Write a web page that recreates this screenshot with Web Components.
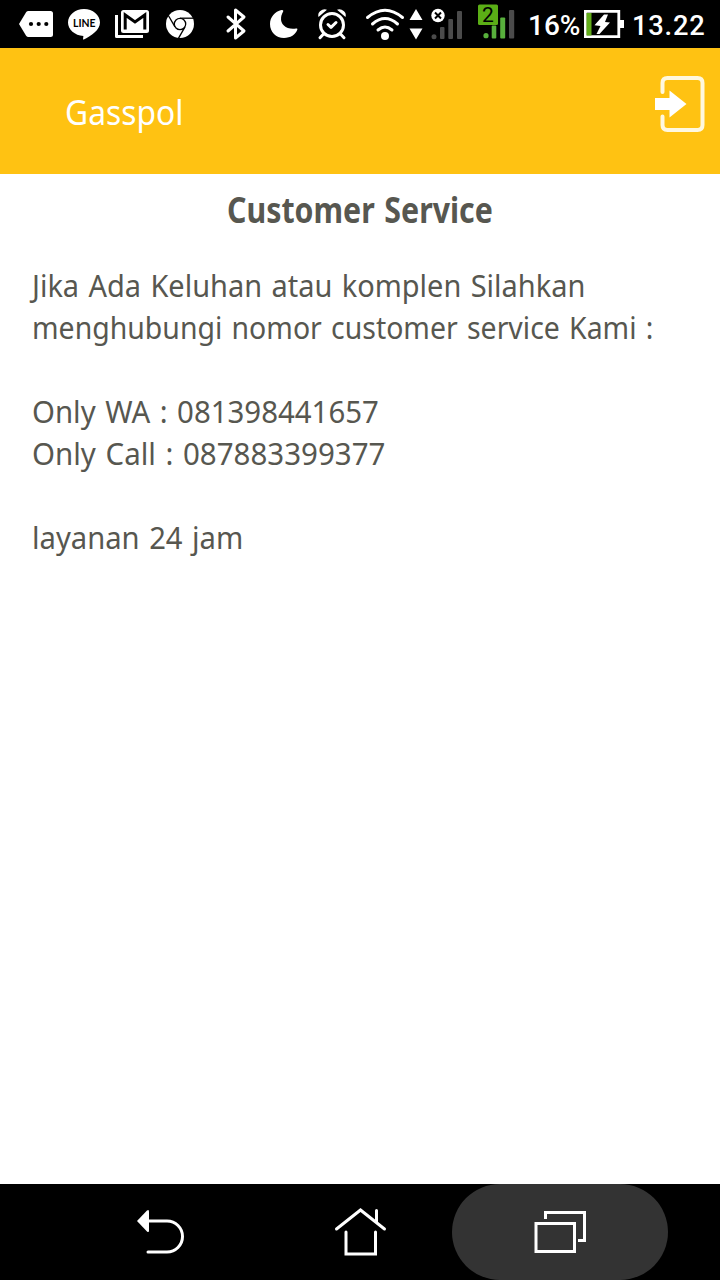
<!DOCTYPE html>
<html lang="id">
<head>
<meta charset="utf-8">
<title>Gasspol</title>
<style>
    html, body {
        margin: 0;
        height: 100%;
        background: #fff;
    }
</style>
</head>
<body>
<app-screen>
    <status-bar slot="status"></status-bar>
    <app-header slot="header"><fit-text width="118">Gasspol</fit-text></app-header>
    <service-info>
        <fit-text slot="title" width="266">Customer Service</fit-text>
        <fit-text width="553">Jika Ada Keluhan atau komplen Silahkan</fit-text>
        <fit-text width="621">menghubungi nomor customer service Kami :</fit-text>
        <br>
        <fit-text width="347">Only WA : 081398441657</fit-text>
        <fit-text width="353">Only Call : 087883399377</fit-text>
        <br>
        <fit-text width="211">layanan 24 jam</fit-text>
    </service-info>
    <nav-bar slot="nav"></nav-bar>
</app-screen>

<script>
// One line of text, condensed to the given width
class FitText extends HTMLElement {
    constructor() {
        super();
        this.attachShadow({ mode: 'open' });
        this.shadowRoot.innerHTML = `
            <style>
                :host {
                    display: block;
                    white-space: nowrap;
                }

                span {
                    display: inline-block;
                    transform-origin: 0 50%;
                }
            </style>
            <span><slot></slot></span>
        `;
    }

    connectedCallback() {
        const span = this.shadowRoot.querySelector('span');
        const width = Number(this.getAttribute('width'));
        this.style.width = width + 'px';
        requestAnimationFrame(() => {
            span.style.transform = `scaleX(${width / span.offsetWidth})`;
        });
    }
}

class AppScreen extends HTMLElement {
    constructor() {
        super();
        this.attachShadow({ mode: 'open' });
        this.shadowRoot.innerHTML = `
            <style>
                :host {
                    display: flex;
                    flex-direction: column;
                    width: 720px;
                    height: 1280px;
                    overflow: hidden;
                    background: #fff;
                    color: #575750;
                    font-family: "Noto Sans", "Open Sans", sans-serif;
                }

                main {
                    flex: 1;
                }
            </style>
            <slot name="status"></slot>
            <slot name="header"></slot>
            <main><slot></slot></main>
            <slot name="nav"></slot>
        `;
    }
}

class StatusBar extends HTMLElement {
    constructor() {
        super();
        this.attachShadow({ mode: 'open' });
        this.shadowRoot.innerHTML = `
            <style>
                :host {
                    display: flex;
                    height: 48px;
                    background: #000;
                    color: #fff;
                    font: 500 28px/51px Roboto, sans-serif;
                }

                svg {
                    flex: none;
                    height: 48px;
                    fill: #fff;
                }

                .line {
                    fill: none;
                    stroke: #fff;
                    stroke-width: 3;
                    stroke-linecap: round;
                    stroke-linejoin: round;
                }

                .cut {
                    fill: none;
                    stroke: #000;
                    stroke-width: 1.6;
                }

                .off { fill: #4b4b4b; }
                .on { fill: #58b03c; }

                .level {
                    width: 56px;
                    padding-left: 7px;
                }

                .clock {
                    padding-left: 6px;
                    letter-spacing: .8px;
                }
            </style>

            <svg width="60" viewBox="0 0 60 48">
                <path d="M28.5 11h22a2.5 2.5 0 0 1 2.500 2.500v21a2.500 2.500 0 0 1-2.500 2.500h-22q-1.600 0-2.400-1.300L19 24l7.100-11.700q.8-1.300 2.400-1.300z"/>
                <g fill="#000"><circle cx="31" cy="24" r="2.1"/><circle cx="38.7" cy="24" r="2.1"/><circle cx="46.3" cy="24" r="2.1"/></g>
            </svg>
            <svg width="48" viewBox="60 0 48 48">
                <path d="M84 9c8.800 0 16 6 16 13.400 0 4-2.200 7-5.200 9.800-3.300 3-8 6-11 7.200-.7.200-.9-.3-.7-1l.3-2.400C74.800 35.200 68 29.600 68 22.400 68 15 75.200 9 84 9z"/>
                <text x="73" y="26.500" font-size="10.500" font-weight="700" font-family="Lato" fill="#000" textLength="22.500" lengthAdjust="spacingAndGlyphs">LINE</text>
            </svg>
            <svg width="48" viewBox="108 0 48 48">
                <path class="line" style="stroke-linecap:butt" d="M116.500 15v21.500H143"/>
                <rect x="121" y="10" width="28" height="23" rx="2.500"/>
                <path class="cut" style="stroke-width:3" d="M125.200 29.500V15L135 22l9.800-7v14.500"/>
            </svg>
            <svg width="48" viewBox="156 0 48 48">
                <circle cx="180" cy="24" r="14"/>
                <g class="cut" style="stroke-width:1.300">
                    <circle cx="180" cy="24" r="5.700"/>
                    <path d="M180 18.200h13.500"/>
                    <path d="M180 18.200h13.500" transform="rotate(120 180 24)"/>
                    <path d="M180 18.200h13.500" transform="rotate(240 180 24)"/>
                </g>
            </svg>
            <svg width="56" viewBox="204 0 56 48">
                <path class="line" d="M228 17l16 14-8.500 7V10l8.500 7-16 14"/>
            </svg>
            <svg width="48" viewBox="260 0 48 48">
                <path d="M281.500 10c-6.500 1.500-11.500 7-11.500 14 0 8 6 14 14 14 6.500 0 11.500-3.300 13.300-8.200.3-1-.2-1.500-1.200-1.300-9 1.500-16-3.500-15-11 .3-2.500 1-4 2-5.800.6-1.200-.2-2.100-1.600-1.700z"/>
            </svg>
            <svg width="48" viewBox="308 0 48 48">
                <circle class="line" cx="332" cy="25" r="11.500"/>
                <path class="line" d="M323.500 34l-3.500 3.700M340.500 34l3.500 3.700M328 24.500l3 2.800 5-4.800"/>
                <path d="M318.500 17q-1-3.500 1.500-5.800 3.500-2.800 7-1.400zM345.500 17q1-3.500-1.500-5.800-3.500-2.800-7-1.400z"/>
            </svg>
            <svg width="52" viewBox="356 0 52 48">
                <path class="line" d="M367.500 17.500q17.500-14.500 35 0M372.500 24q12.500-11 25 0M378 30q7-6 14 0"/>
                <circle cx="385" cy="36" r="4"/>
            </svg>
            <svg width="18" viewBox="408 0 18 48">
                <path d="M416 9l6.500 11h-13zM416 39.500l6.500-11h-13z"/>
            </svg>
            <svg width="44" viewBox="426 0 44 48">
                <g class="off"><circle cx="434" cy="36.700" r="2.500"/><rect x="440" y="27" width="4.500" height="12" rx="1"/><rect x="448.300" y="19" width="4.700" height="20" rx="1"/><rect x="457" y="11" width="5" height="28" rx="1"/></g>
                <circle cx="438" cy="15.500" r="6.700"/>
                <path class="cut" style="stroke-width:2" d="M435 12.500l6 6m0-6l-6 6"/>
            </svg>
            <svg width="51" viewBox="470 0 51 48">
                <g class="on"><circle cx="486" cy="35.700" r="2.600"/><rect x="491.700" y="25.500" width="4.600" height="13" rx="1"/><rect x="500.200" y="17.500" width="5" height="21" rx="1"/></g>
                <rect class="off" x="509" y="10" width="5.200" height="28.500" rx="1"/>
                <rect x="478" y="4.500" width="20" height="20.500" rx="1.500" fill="#5bae16"/>
                <text x="488" y="21.500" font-size="21" font-weight="400" text-anchor="middle" fill="#000">2</text>
            </svg>
            <span class="level"><fit-text width="52">16%</fit-text></span>
            <svg width="42" viewBox="584 0 42 48">
                <path fill="none" stroke="#fff" stroke-width="2.800" d="M585.400 11.400h33.400v25.200h-33.400z"/>
                <rect x="620" y="20" width="4" height="8"/>
                <rect x="586.500" y="13" width="5" height="22.500" fill="#62ad19"/>
                <path d="M604 14.500h4l-3 7.500 5 .500L599.500 34h-3l4-8-6-.700z"/>
            </svg>
            <span class="clock"><fit-text width="73">13.22</fit-text></span>
        `;
    }
}

class AppHeader extends HTMLElement {
    constructor() {
        super();
        this.attachShadow({ mode: 'open' });
        this.shadowRoot.innerHTML = `
            <style>
                :host {
                    display: flex;
                    align-items: center;
                    justify-content: space-between;
                    box-sizing: border-box;
                    height: 126px;
                    padding: 0 12px 0 65px;
                    background: #ffc212;
                    color: #fff;
                    font-size: 35px;
                }

                svg {
                    margin-bottom: 14px;
                }
            </style>
            <slot></slot>
            <svg width="56" height="60" viewBox="652 74 56 60">
                <path fill="none" stroke="#fff8df" stroke-width="4" stroke-linecap="round" d="M662.500 92v-9q0-5 5-5h30q5 0 5 5v42q0 5-5 5h-30q-5 0-5-5v-8.500"/>
                <path fill="#fff" d="M655 98h14.500v-7.500L686.500 104l-17 13.500V110H655z"/>
            </svg>
        `;
    }
}

class ServiceInfo extends HTMLElement {
    constructor() {
        super();
        this.attachShadow({ mode: 'open' });
        this.shadowRoot.innerHTML = `
            <style>
                :host {
                    display: block;
                    padding: 15px 33px 15px 32px;
                    font-size: 31px;
                    line-height: 42px;
                    word-spacing: 2px;
                }

                h1 {
                    display: flex;
                    justify-content: center;
                    margin: 0 0 33px;
                    font-size: 35px;
                    line-height: 42px;
                    font-weight: 700;
                }
            </style>
            <h1><slot name="title"></slot></h1>
            <slot></slot>
        `;
    }
}

class NavBar extends HTMLElement {
    constructor() {
        super();
        this.attachShadow({ mode: 'open' });
        this.shadowRoot.innerHTML = `
            <style>
                :host {
                    display: flex;
                    justify-content: center;
                    height: 96px;
                    background: #000;
                }

                button {
                    width: 216px;
                    margin: 0 -8px;
                    padding: 0;
                    border: 0;
                    background: none;
                }

                .pressed {
                    border-radius: 48px;
                    background: #333;
                }

                svg {
                    display: block;
                    fill: none;
                    stroke: #fff;
                    stroke-width: 3;
                    stroke-linecap: round;
                }
            </style>
            <button aria-label="Back">
                <svg width="216" height="96" viewBox="52 1184 216 96">
                    <path d="M147 1221h20a15.500 15.500 0 0 1 0 31H148"/>
                    <path fill="#fff" stroke="none" d="M137 1221l10-10.500q2-1.500 2 1v19q0 2.500-2 1z"/>
                </svg>
            </button>
            <button aria-label="Home">
                <svg width="216" height="96" viewBox="252 1184 216 96">
                    <path d="M336.500 1229l24-19 24 19M376.500 1210.500v11.500M346 1232v22h29.500v-22"/>
                </svg>
            </button>
            <button class="pressed" aria-label="Recent apps">
                <svg width="216" height="96" viewBox="452 1184 216 96">
                    <path stroke-linecap="butt" d="M545.500 1219v-6.500h39v28H578M536 1223.500h38.500v28H536z"/>
                </svg>
            </button>
        `;
    }
}

customElements.define('fit-text', FitText);
customElements.define('app-screen', AppScreen);
customElements.define('status-bar', StatusBar);
customElements.define('app-header', AppHeader);
customElements.define('service-info', ServiceInfo);
customElements.define('nav-bar', NavBar);
</script>
</body>
</html>
